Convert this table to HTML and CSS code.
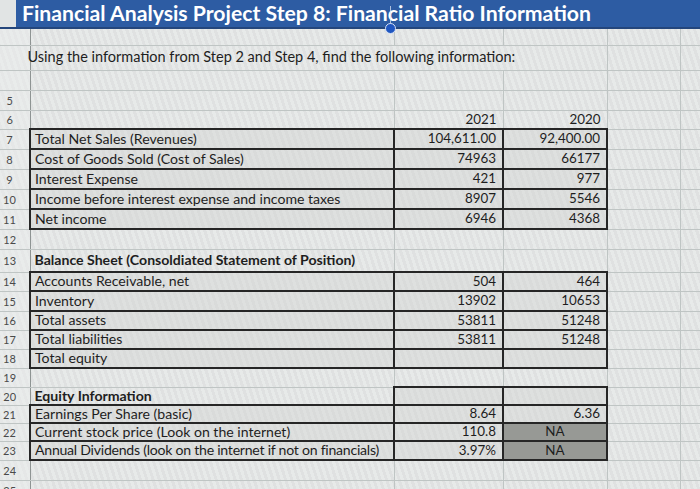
FILE: index.html
```html
<!DOCTYPE html>
<html>
<head>
<meta charset="utf-8">
<link rel="stylesheet" href="styles.css">
</head>
<body>
<div class="sheet">
<table class="grid">
  <colgroup>
    <col class="c-rh"><col class="c-a"><col class="c-b"><col class="c-c"><col class="c-d"><col class="c-e">
  </colgroup>
  <tr class="h28"><td class="title" colspan="6">Financial Analysis Project Step 8: Financial Ratio Information</td></tr>
  <tr class="h17"><td class="rh"></td><td></td><td></td><td></td><td></td><td></td></tr>
  <tr class="h25"><td class="rh"></td><td class="intro" colspan="3">Using the information from Step 2 and Step 4, find the following information:</td><td></td><td></td></tr>
  <tr class="h20"><td class="rh"></td><td></td><td></td><td></td><td></td><td></td></tr>
  <tr class="h20"><td class="rh">5</td><td></td><td></td><td></td><td></td><td></td></tr>
  <tr class="h19"><td class="rh">6</td><td></td><td class="num">2021</td><td class="num">2020</td><td></td><td></td></tr>
  <tr class="h20"><td class="rh">7</td><td class="lbl box">Total Net Sales (Revenues)</td><td class="num box">104,611.00</td><td class="num box">92,400.00</td><td></td><td></td></tr>
  <tr class="h20"><td class="rh">8</td><td class="lbl box">Cost of Goods Sold (Cost of Sales)</td><td class="num box">74963</td><td class="num box">66177</td><td></td><td></td></tr>
  <tr class="h20"><td class="rh">9</td><td class="lbl box">Interest Expense</td><td class="num box">421</td><td class="num box">977</td><td></td><td></td></tr>
  <tr class="h20"><td class="rh">10</td><td class="lbl box">Income before interest expense and income taxes</td><td class="num box">8907</td><td class="num box">5546</td><td></td><td></td></tr>
  <tr class="h20"><td class="rh">11</td><td class="lbl box">Net income</td><td class="num box">6946</td><td class="num box">4368</td><td></td><td></td></tr>
  <tr class="h20"><td class="rh">12</td><td></td><td></td><td></td><td></td><td></td></tr>
  <tr class="h23"><td class="rh">13</td><td class="lbl head">Balance Sheet (Consoldiated Statement of Position)</td><td></td><td></td><td></td><td></td></tr>
  <tr class="h19"><td class="rh">14</td><td class="lbl box">Accounts Receivable, net</td><td class="num box">504</td><td class="num box">464</td><td></td><td></td></tr>
  <tr class="h20"><td class="rh">15</td><td class="lbl box">Inventory</td><td class="num box">13902</td><td class="num box">10653</td><td></td><td></td></tr>
  <tr class="h19"><td class="rh">16</td><td class="lbl box">Total assets</td><td class="num box">53811</td><td class="num box">51248</td><td></td><td></td></tr>
  <tr class="h19"><td class="rh">17</td><td class="lbl box">Total liabilities</td><td class="num box">53811</td><td class="num box">51248</td><td></td><td></td></tr>
  <tr class="h19"><td class="rh">18</td><td class="lbl box">Total equity</td><td class="num box"></td><td class="num box"></td><td></td><td></td></tr>
  <tr class="h19"><td class="rh">19</td><td></td><td></td><td></td><td></td><td></td></tr>
  <tr class="h18"><td class="rh">20</td><td class="lbl head">Equity Information</td><td class="num box"></td><td class="num box"></td><td></td><td></td></tr>
  <tr class="h18"><td class="rh">21</td><td class="lbl box">Earnings Per Share (basic)</td><td class="num box">8.64</td><td class="num box">6.36</td><td></td><td></td></tr>
  <tr class="h18"><td class="rh">22</td><td class="lbl box">Current stock price (Look on the internet)</td><td class="num box">110.8</td><td class="na box">NA</td><td></td><td></td></tr>
  <tr class="h19"><td class="rh">23</td><td class="lbl box tight">Annual Dividends (look on the internet if not on financials)</td><td class="num box">3.97%</td><td class="na box">NA</td><td></td><td></td></tr>
  <tr class="h20"><td class="rh">24</td><td></td><td></td><td></td><td></td><td></td></tr>
  <tr class="h20"><td class="rh">25</td><td></td><td></td><td></td><td></td><td></td></tr>
</table>
<span class="handle-line"></span>
<span class="handle"></span>
</div>
</body>
</html>
```

FILE: styles.css
```css
html, body {
  margin: 0;
  padding: 0;
  width: 700px;
  height: 489px;
  overflow: hidden;
  background: #e3e6e5;
}

.sheet {
  position: relative;
  width: 700px;
  height: 489px;
  overflow: hidden;
  background:
    repeating-linear-gradient(72deg, rgba(255,255,255,0.18) 0 3px, rgba(200,190,200,0.10) 3px 6px),
    #e2e5e4;
}

.grid {
  border-collapse: collapse;
  table-layout: fixed;
  width: 720px;
  font-family: Lato, "Open Sans", sans-serif;
  font-size: 14.1px;
  color: #1e1e1e;
}

.c-rh { width: 30px; }
.c-a { width: 364px; }
.c-b { width: 109px; }
.c-c { width: 104px; }
.c-d { width: 73px; }
.c-e { width: 40px; }

.grid td {
  border: 1px solid #bfc5c4;
  padding: 0;
  white-space: nowrap;
  overflow: visible;
  line-height: 1;
  vertical-align: middle;
}

.h17 { height: 17px; }
.h18 { height: 18px; }
.h19 { height: 19px; }
.h20 { height: 20px; }
.h23 { height: 23px; }
.h25 { height: 25px; }
.h28 { height: 28px; }

.grid td.rh {
  font-size: 11px;
  color: #4a4a4a;
  text-align: center;
  padding-right: 10px;
  border-left: none;
  border-right: 1px solid #8e9493;
  background: rgba(235,238,238,0.5);
}

.grid td.title {
  background: linear-gradient(to right, #e1e4e4 16px, #2d5ca3 16px);
  border: none;
  border-bottom: 2px solid #24467c;
  color: #ffffff;
  font-weight: 700;
  font-size: 21.2px;
  padding-left: 22px;
  vertical-align: middle;
}

.grid td.intro {
  padding-left: 0;
  text-indent: -3px;
  font-size: 14.5px;
  overflow: visible;
}

.grid td.lbl {
  padding-left: 4px;
}

.grid td.tight {
  letter-spacing: -0.25px;
}

.grid td.head {
  font-weight: 700;
  border-color: #bfc5c4;
}

.grid td.num {
  text-align: right;
  padding-right: 6px;
  font-size: 13.4px;
}

.grid td.box {
  border: 2px solid #262626;
  background: rgba(210,212,210,0.45);
}

.grid td.na {
  text-align: center;
  background: #979995;
  color: #1e1e1e;
  font-size: 13.4px;
}

.handle-line {
  position: absolute;
  left: 390px;
  top: 6px;
  width: 1px;
  height: 22px;
  background: rgba(230,235,245,0.7);
}

.handle {
  position: absolute;
  left: 385px;
  top: 23px;
  width: 9px;
  height: 9px;
  border-radius: 50%;
  background: #1f56c0;
  border: 1px solid #d7e2f5;
}
```
